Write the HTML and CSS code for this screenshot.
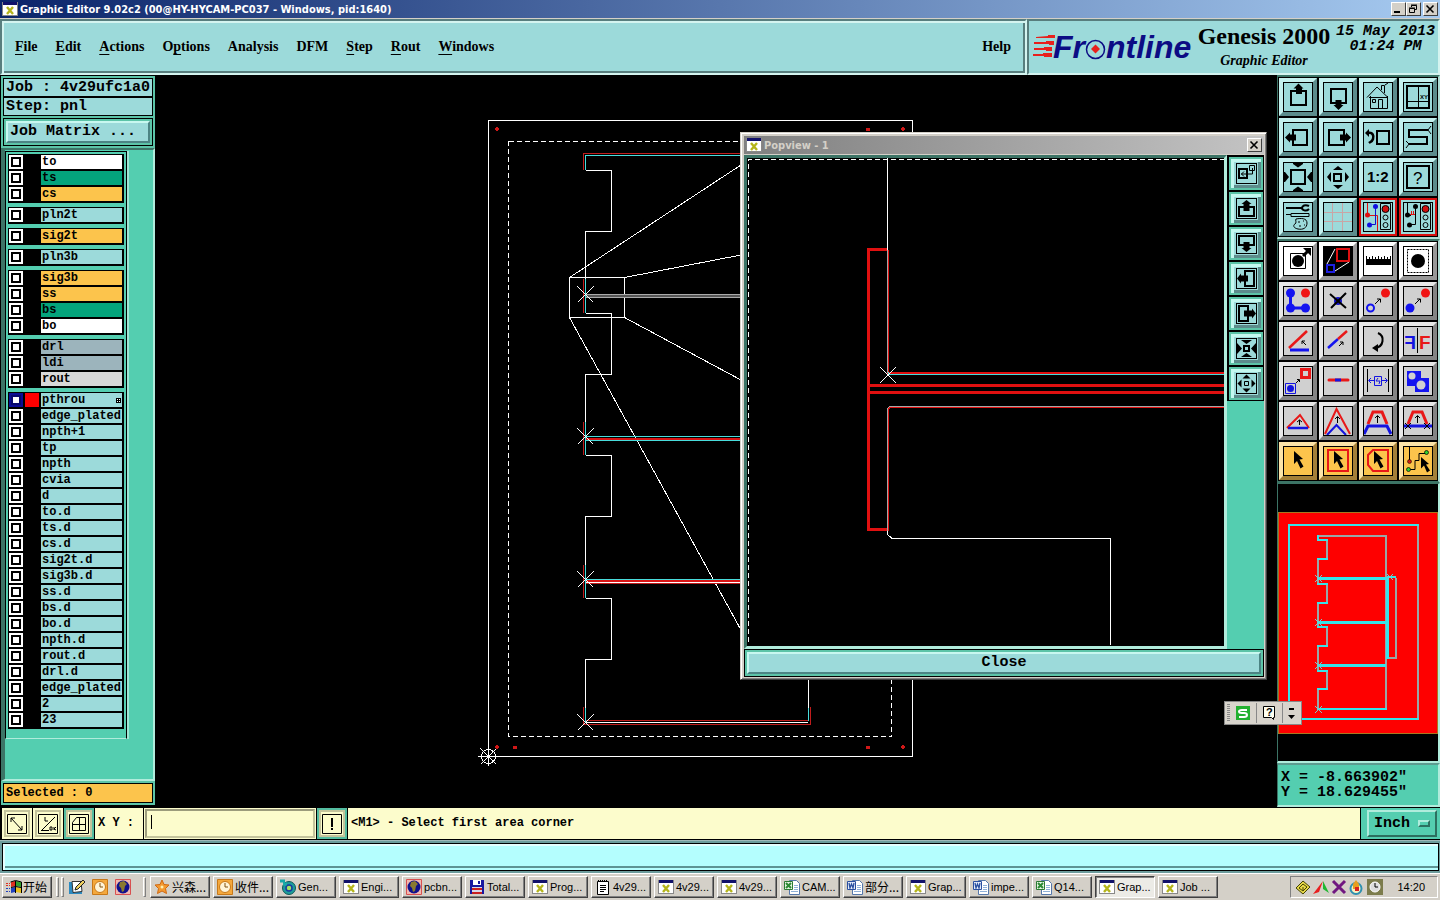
FILE: index.html
```html
<!DOCTYPE html>
<html lang="en">
  <head>
    <title>Graphic Editor 9.02c2</title>
    <meta charset="UTF-8" />
    <link rel="stylesheet" href="styles.css">
  </head>

  <body>
    <!-- shared icons -->
    <svg class="defs" width="0" height="0">
      <symbol id="xwin" viewBox="0 0 16 16">
        <path fill="#888" d="M0 1h16v14H0z"/><path fill="#fff" d="M1 4h14v10H1z"/><path fill="#11116a" d="M1 1h14v3H1z"/>
        <path stroke="#b5b51c" stroke-width="2.4" d="M5 6l6 7M11 6l-6 7"/>
      </symbol>
      <symbol id="excel" viewBox="0 0 16 16">
        <path fill="#fff" stroke="#5577aa" d="M5.500 1.500h7l3 3v11h-10z"/><path stroke="#8fb0d8" d="M10 6.500h4M10 8.500h4M10 10.500h4M7 12.500h7"/>
        <path fill="#e8f5e4" stroke="#2c7a34" d="M.5 2.500h8v8h-8z"/><path stroke="#2c8a34" stroke-width="2" d="M2 4l5 5M7 4l-5 5"/>
      </symbol>
      <symbol id="word" viewBox="0 0 16 16">
        <path fill="#fff" stroke="#5577aa" d="M5.500 1.500h7l3 3v11h-10z"/><path stroke="#8fb0d8" d="M10 6.500h4M10 8.500h4M10 10.500h4M7 12.500h7"/>
        <path fill="#e4ecfa" stroke="#2a4fa0" d="M.5 2.500h8v8h-8z"/><path fill="none" stroke="#2a4fa0" stroke-width="1.300" d="M2 4l1 5 1.500-4L6 9l1-5"/>
      </symbol>
      <symbol id="globe" viewBox="0 0 16 16">
        <path fill="#f2b8b0" stroke="#d85050" d="M.5.5h15v15H.5z"/><circle cx="8" cy="8" r="6.500" fill="#10108c"/>
        <path fill="#8a7a30" d="M5 3l4-1 3 3-2 2-1 5-2 1-1-4-2-2z"/>
      </symbol>
      <symbol id="clock" viewBox="0 0 16 16">
        <path fill="#f4a83c" stroke="#c87818" d="M.5.5h15v15H.5z"/><circle cx="8" cy="8" r="5.500" fill="#fff4d8" stroke="#c87818"/>
        <path fill="none" stroke="#805010" d="M8 4v4h3"/>
      </symbol>
      <symbol id="cursor" viewBox="0 0 30 30"><path d="M11 5l9 8-3.500.500 4 7-3 2-3.500-7.500-3 3z"/></symbol>
    </svg>

    <div class="titlebar">
      <svg class="ico"><use href="#xwin"/></svg>
      <span class="caption">Graphic Editor 9.02c2 (00@HY-HYCAM-PC037 - Windows, pid:1640)</span>
      <button class="win" aria-label="Minimize"><svg viewBox="0 0 12 10"><path d="M2 7h6v2H2z"/></svg></button>
      <button class="win" aria-label="Restore"><svg viewBox="0 0 12 10"><path fill="none" stroke="#000" d="M4.500 3V1.500h5v4H8M2.500 4.500h5v4h-5zM4 1h6M2 4h6"/></svg></button>
      <button class="win last" aria-label="Close"><svg viewBox="0 0 12 10"><path stroke="#000" stroke-width="1.600" d="M2.500 1.500l7 7M9.500 1.500l-7 7"/></svg></button>
    </div>

    <header>
      <nav class="menubar">
        <a href="#"><u>F</u>ile</a>
        <a href="#"><u>E</u>dit</a>
        <a href="#"><u>A</u>ctions</a>
        <a href="#">O<u>p</u>tions</a>
        <a href="#">Analysis</a>
        <a href="#">DFM</a>
        <a href="#"><u>S</u>tep</a>
        <a href="#"><u>R</u>out</a>
        <a href="#"><u>W</u>indows</a>
        <a href="#" class="help">Help</a>
      </nav>
      <div class="brand">
        <svg class="logo" viewBox="1031 28 164 36">
          <g fill="#e8201c">
            <path d="M1036 37l12-1v-1h7v3h-19zM1034 42h12v-1h8v4h-5v-1h-15zM1034 48h10v-1h8v4h-6v-1h-12zM1033 54h10v-1h9v4h-8v-1h-11z"/>
            <path d="M1095.500 44.500l4.500 4.500-4.500 4.500-4.500-4.500z"/>
          </g>
          <text x="1053" y="58">Fr</text>
          <circle cx="1095.500" cy="49.500" r="9" fill="none" stroke="#0c0c84" stroke-width="1.500"/>
          <text x="1106" y="58">ntline</text>
        </svg>
        <div class="product">
          <div class="name">Genesis 2000</div>
          <div class="sub">Graphic Editor</div>
        </div>
        <div class="date">15 May 2013<br>01:24 PM</div>
      </div>
    </header>

    <main>
      <aside class="side">
        <div class="info">Job : 4v29ufc1a0</div>
        <div class="info">Step: pnl</div>
        <div class="matrix"><button>Job Matrix ...</button></div>
        <div class="scroll">
          <div class="layers">
            <div class="group">
              <label class="white"><input type="checkbox"><i></i><span>to</span></label>
              <label class="green"><input type="checkbox"><i></i><span>ts</span></label>
              <label class="orange"><input type="checkbox"><i></i><span>cs</span></label>
            </div>
            <div class="group">
              <label><input type="checkbox"><i></i><span>pln2t</span></label>
            </div>
            <div class="group">
              <label class="orange"><input type="checkbox"><i></i><span>sig2t</span></label>
            </div>
            <div class="group">
              <label><input type="checkbox"><i></i><span>pln3b</span></label>
            </div>
            <div class="group">
              <label class="orange"><input type="checkbox"><i></i><span>sig3b</span></label>
              <label class="orange"><input type="checkbox"><i></i><span>ss</span></label>
              <label class="green"><input type="checkbox"><i></i><span>bs</span></label>
              <label class="white"><input type="checkbox"><i></i><span>bo</span></label>
            </div>
            <div class="group">
              <label class="slate"><input type="checkbox"><i></i><span>drl</span></label>
              <label class="slate"><input type="checkbox"><i></i><span>ldi</span></label>
              <label class="grey"><input type="checkbox"><i></i><span>rout</span></label>
            </div>
            <div class="group">
              <label class="work"><input type="checkbox" checked><i></i><span>pthrou<svg viewBox="0 0 5 5"><path d="M0 0h5v5H0z"/><path fill="#fff" d="M1 1h1v1H1zM3 1h1v1H3zM1 3h1v1H1zM3 3h1v1H3z"/></svg></span></label>
              <label><input type="checkbox"><i></i><span>edge_plated</span></label>
              <label><input type="checkbox"><i></i><span>npth+1</span></label>
              <label><input type="checkbox"><i></i><span>tp</span></label>
              <label><input type="checkbox"><i></i><span>npth</span></label>
              <label><input type="checkbox"><i></i><span>cvia</span></label>
              <label><input type="checkbox"><i></i><span>d</span></label>
              <label><input type="checkbox"><i></i><span>to.d</span></label>
              <label><input type="checkbox"><i></i><span>ts.d</span></label>
              <label><input type="checkbox"><i></i><span>cs.d</span></label>
              <label><input type="checkbox"><i></i><span>sig2t.d</span></label>
              <label><input type="checkbox"><i></i><span>sig3b.d</span></label>
              <label><input type="checkbox"><i></i><span>ss.d</span></label>
              <label><input type="checkbox"><i></i><span>bs.d</span></label>
              <label><input type="checkbox"><i></i><span>bo.d</span></label>
              <label><input type="checkbox"><i></i><span>npth.d</span></label>
              <label><input type="checkbox"><i></i><span>rout.d</span></label>
              <label><input type="checkbox"><i></i><span>drl.d</span></label>
              <label><input type="checkbox"><i></i><span>edge_plated</span></label>
              <label><input type="checkbox"><i></i><span>2</span></label>
              <label><input type="checkbox"><i></i><span>23</span></label>
            </div>
          </div>
        </div>
        <div class="selected">Selected : 0</div>
      </aside>

      <!-- panel drawing -->
      <svg class="canvas" viewBox="156 75 1121 732" preserveAspectRatio="xMinYMin slice" shape-rendering="crispEdges">
        <g fill="none" stroke="#fff">
          <path d="M488.500 120.500h424v636h-424z"/>
          <path stroke-dasharray="5 3" d="M508.500 141.500h383v595h-383z"/>
          <path d="M585.500 170.500h26v61h-26V279M585.500 313.500h26v61h-26V422M585.500 455.500h26v61h-26V565M585.500 598.500h26v61h-26V708M808.500 600V708"/>
          <path d="M569.500 277.500h55v40h-55z"/>
          <path d="M569.500 277.500L741 165M624.500 277.500L741 255M624.500 317.500L741 380M569.500 317.500L741 630"/>
        </g>
        <g fill="none" stroke="#c01c1c">
          <path d="M583.500 170v-16.500H741M583.500 279v34M583.500 422v33M583.500 565v33M583.500 707v17.500h227V707M585 720.500h223"/>
          <path stroke="#d81414" stroke-width="2" d="M586 439h155M586 581h155"/>
          <path d="M586 583.500h155"/>
        </g>
        <g fill="none" stroke="#48dcdc">
          <path d="M585.500 170v-14.500H741M585.500 279v34M585.500 422v33M585.500 565v33M585.500 708v14M808.500 708v13"/>
          <path d="M586 436.500h155M586 440.500h155M586 579.500h155"/>
          <path stroke="#555" stroke-width="2" d="M586 296h155"/>
          <path stroke="#aaa" d="M586 294.500h155M586 297.500h155"/>
          <path stroke="#fff" d="M586 582.500h155M586 722.500h222"/>
        </g>
        <g fill="none" stroke="#fff">
          <path d="M577.500 286.500l16 16M593.500 286.500l-16 16M577.500 428.500l16 16M593.500 428.500l-16 16M577.500 571.500l16 16M593.500 571.500l-16 16M577.500 714.500l16 16M593.500 714.500l-16 16"/>
          <circle cx="488.500" cy="756.500" r="7"/>
          <path d="M478 756.500h20M488.500 746v20M480.500 748.500l16 16M496.500 748.500l-16 16"/>
        </g>
        <path fill="#d01818" d="M496 127h2v1h1v2h-1v1h-2v-1h-1v-2h1zM866 128h4v3h-4zM902 127h2v1h1v2h-1v1h-2v-1h-1v-2h1zM496 745h2v1h1v2h-1v1h-2v-1h-1v-2h1zM513 746h4v3h-4zM866 746h4v3h-4zM902 745h2v1h1v2h-1v1h-2v-1h-1v-2h1z"/>
      </svg>

      <aside class="tools">
        <div class="panel">
          <button aria-label="Pan up"><svg viewBox="0 0 30 30"><rect x="8" y="9" width="15" height="14" fill="none" stroke="#000" stroke-width="2"/><path d="M15.500 1.500l5 5h-1.500V12h-6V6.500h-2.500z"/></svg></button>
          <button aria-label="Pan down"><svg viewBox="0 0 30 30"><rect x="8" y="7" width="15" height="14" fill="none" stroke="#000" stroke-width="2"/><path d="M15.500 28l5-5h-2v-5h-6v5h-2z"/></svg></button>
          <button aria-label="Home"><svg viewBox="0 0 30 30"><g fill="none" stroke="#000"><path d="M4 15.500L14 5l11 10.500M7.500 14v12.500h17V14M6 15.500h18M18.500 8V3.500h3V11M15.500 26v-8.500h4V26M9.500 17.500h3v3h-3z"/><path d="M22 3l3-2"/></g></svg></button>
          <button aria-label="Coordinates"><svg viewBox="0 0 30 30"><rect x="4" y="4" width="22" height="22" fill="none" stroke="#000" stroke-width="2"/><path stroke="#000" d="M15.500 4v22M4 19.500h22"/><text x="17" y="17" font-size="6" font-weight="bold">XY</text></svg></button>
          <button aria-label="Pan left"><svg viewBox="0 0 30 30"><rect x="10" y="8" width="14" height="15" fill="none" stroke="#000" stroke-width="2"/><path d="M2 15.500l5-5v2h6v6H7v2z"/></svg></button>
          <button aria-label="Pan right"><svg viewBox="0 0 30 30"><rect x="6" y="8" width="15" height="15" fill="none" stroke="#000" stroke-width="2"/><path d="M28 15.500l-5-5v2h-6v6h6v2z"/></svg></button>
          <button aria-label="Undo zoom"><svg viewBox="0 0 30 30"><rect x="14" y="9" width="12" height="13" fill="none" stroke="#000" stroke-width="2"/><path d="M2 11l4-4v8z"/><path fill="none" stroke="#000" stroke-width="2.500" d="M5 11c5-1 6 3 5 6s-3 3-4 4"/></svg></button>
          <button aria-label="Serpentine"><svg viewBox="0 0 30 30"><path fill="none" stroke="#000" stroke-width="2" d="M25 8H6v7h18v7H6"/><path stroke="#000" d="M25 8l3-4M25 8l3 4M6 22l-3-3M6 22l-3 4"/></svg></button>
          <button aria-label="Zoom in"><svg viewBox="0 0 30 30"><rect x="8" y="8" width="14" height="14" fill="none" stroke="#000" stroke-width="2"/><path d="M10 1h10v1l-5 3.500L10 2zM10 29h10v-1l-5-3.500-5 3.500zM1 10v10h1l4-5-4-5zM29 10v10h-1l-4-5 4-5z"/></svg></button>
          <button aria-label="Zoom out"><svg viewBox="0 0 30 30"><rect x="11" y="12" width="7" height="7" fill="none" stroke="#000" stroke-width="2"/><path d="M10 8h10l-5-4zM10 23h10l-5 4zM8 10v10l-4-5zM22 10v10l4-5z"/></svg></button>
          <button aria-label="Scale 1:2"><svg viewBox="0 0 30 30"><text x="4" y="20" font-size="15" font-weight="bold">1:2</text></svg></button>
          <button aria-label="Query"><svg viewBox="0 0 30 30"><rect x="4" y="4" width="22" height="22" fill="none" stroke="#000" stroke-width="2"/><text x="10" y="22" font-size="17">?</text></svg></button>
          <button aria-label="Setup"><svg viewBox="0 0 30 30"><path stroke="#000" stroke-width="2" d="M3 6h17"/><path fill="none" stroke="#000" stroke-width="2" d="M26 4c-4-2-7 0-7 2s4 4 7 1"/><path fill="none" stroke="#000" d="M3 12.500h5v-1h18v3H8v-2M13 17c5-1 11-1 11 4s-4 7-9 6-5-4-3-5 0-4 1-5zM15 20h2M20 19h1M21 23h1M16 24h2"/></svg></button>
          <button aria-label="Grid"><svg viewBox="0 0 30 30"><path stroke="#c9a5a5" d="M9.500 1v28M19.500 1v28M1 10.500h28M1 19.500h28"/></svg></button>
          <button class="red" aria-label="Snap"><svg viewBox="0 0 30 30"><path fill="none" stroke="#e01010" d="M4.500 1v12.500h10V29"/><path fill="none" stroke="#1010d0" d="M12.500 4v18.500H7"/><circle cx="4.500" cy="13" r="2.500" fill="#e01010"/><circle cx="12.500" cy="4.500" r="2.500" fill="#1010e0"/><circle cx="6.500" cy="23" r="2.500" fill="#1010e0"/><path fill="none" stroke="#000" d="M17.500 1.500h10v26h-10z"/><circle cx="22.500" cy="7" r="3.500" fill="#d01010" stroke="#000"/><circle cx="22.500" cy="15.500" r="2.500" fill="none" stroke="#000"/><circle cx="22.500" cy="23" r="2.500" fill="none" stroke="#000"/></svg></button>
          <button class="red" aria-label="Drc"><svg viewBox="0 0 30 30"><path fill="none" stroke="#000" d="M4.500 1v12M12.500 4v18.500H7M4 13.500h4"/><path fill="none" stroke="#e01010" d="M7 12.500h5M8.500 9v4M10.500 9v4"/><circle cx="4.500" cy="13" r="2.500"/><circle cx="12.500" cy="4.500" r="2.500"/><circle cx="6.500" cy="23" r="2.500"/><path fill="none" stroke="#000" d="M17.500 1.500h10v26h-10z"/><circle cx="22.500" cy="7" r="3.500" fill="#d01010" stroke="#000"/><circle cx="22.500" cy="15.500" r="2.500" fill="none" stroke="#000"/><circle cx="22.500" cy="23" r="2.500" fill="none" stroke="#000"/></svg></button>
        </div>

        <div class="panel edit">
          <button class="white" aria-label="Feature"><svg viewBox="0 0 30 30"><path fill="none" stroke="#000" d="M7.500 7.500h15v15h-15z"/><circle cx="15" cy="15" r="6"/><path stroke="#000" stroke-width="3" d="M20 10l6-6"/><path d="M20 2h8v8z"/></svg></button>
          <button class="white" aria-label="Popview"><svg viewBox="0 0 30 30"><path d="M0 0h30v30H0z"/><path stroke="#fff" d="M4 18L12 3M12 25l14-9"/><path fill="none" stroke="#e01010" stroke-width="2" d="M14 3h12v12H14z"/><path fill="none" stroke="#2020e0" stroke-width="2" d="M4 19h7v7H4z"/></svg></button>
          <button class="white" aria-label="Measure"><svg viewBox="0 0 30 30"><path d="M3 13h25v6H3zM3 10h1v3H3zM6 11h1v2H6zM9 10h1v3H9zM12 11h1v2h-1zM15 10h1v3h-1zM18 11h1v2h-1zM21 10h1v3h-1zM24 11h1v2h-1zM27 10h1v3h-1z"/></svg></button>
          <button class="white" aria-label="Select area"><svg viewBox="0 0 30 30"><path fill="none" stroke="#000" stroke-dasharray="2 1" d="M4.500 3.500h21v23h-21z"/><circle cx="15" cy="15" r="7"/></svg></button>

          <button aria-label="Chain"><svg viewBox="0 0 30 30"><path fill="none" stroke="#1414f0" stroke-width="3" d="M7.500 7v15h15"/><g fill="#1414f0"><circle cx="7.500" cy="7" r="4.500"/><circle cx="7.500" cy="22" r="4.500"/><circle cx="22.500" cy="22" r="4.500"/></g><circle cx="22.500" cy="7" r="4.500" fill="#f01414"/></svg></button>
          <button aria-label="Delete"><svg viewBox="0 0 30 30"><circle cx="15" cy="15" r="4" fill="#1414c8"/><path stroke="#000" stroke-width="2" d="M7 8l16 14M23 7L8 22"/></svg></button>
          <button aria-label="Move"><svg viewBox="0 0 30 30"><circle cx="7.500" cy="22" r="3.500" fill="none" stroke="#1414f0" stroke-width="2"/><circle cx="22.500" cy="7" r="4.500" fill="#f01414"/><path fill="none" stroke="#000" d="M12 18l5-5M14 13h3.500v3.500"/></svg></button>
          <button aria-label="Copy"><svg viewBox="0 0 30 30"><circle cx="7" cy="22" r="4.500" fill="#1414f0"/><circle cx="22.500" cy="7" r="4.500" fill="#f01414"/><path fill="none" stroke="#000" d="M12 18l5-5M14 13h3.500v3.500"/></svg></button>

          <button aria-label="Angle"><svg viewBox="0 0 30 30"><path stroke="#e81818" stroke-width="2.500" d="M6 22L24 5"/><path stroke="#1414f0" stroke-width="3" d="M7 24h19"/><path fill="none" stroke="#000" d="M23 19l-4-4M19 18v-3h3"/></svg></button>
          <button aria-label="Extend"><svg viewBox="0 0 30 30"><path stroke="#1414f0" stroke-width="2.500" d="M5 22l10-9"/><path stroke="#e81818" stroke-width="2.500" d="M15 13l9-8"/><path fill="none" stroke="#000" d="M16 20l4-4M17 16h3v3"/></svg></button>
          <button aria-label="Rotate"><svg viewBox="0 0 30 30"><path fill="none" stroke="#000" stroke-width="2" d="M15 7c7 3 6 14-3 15"/><path d="M9 22l6-4v8z"/></svg></button>
          <button aria-label="Mirror"><svg viewBox="0 0 30 30"><text transform="scale(-1 1)" x="-13" y="23" font-size="19" font-weight="bold" fill="#1414e0">F</text><path stroke="#000" d="M14.500 2v25"/><text x="16" y="23" font-size="19" font-weight="bold" fill="#e81818">F</text></svg></button>

          <button aria-label="Change symbol"><svg viewBox="0 0 30 30"><path fill="none" stroke="#e81818" stroke-width="3" d="M18.500 3.500h8v8h-8z"/><path fill="none" stroke="#1414e0" d="M2.500 17.500h10v10h-10z"/><circle cx="7.500" cy="22.500" r="3.500" fill="#1414e0"/><path fill="none" stroke="#000" d="M13 17l3-3M14 13.500h2.500V16"/></svg></button>
          <button aria-label="Break"><svg viewBox="0 0 30 30"><path stroke="#e81818" stroke-width="3" stroke-linecap="round" d="M6 14h19"/><path stroke="#1414e0" stroke-width="3" d="M12 14h6"/></svg></button>
          <button aria-label="Spacing"><svg viewBox="0 0 30 30"><path stroke="#000" d="M4.500 3v23M25.500 3v23"/><path fill="none" stroke="#1414e0" d="M11.500 10.500h7v9h-7zM6 14.500h5M19 14.500h5M8 12l-2.500 2.500L8 17M22 12l2.500 2.500L22 17M15 12l-2 3h4l-1 3"/></svg></button>
          <button aria-label="Contourize"><svg viewBox="0 0 30 30"><path fill="#1414f0" d="M4 5h14v7h8v14H12v-6H4z"/><circle cx="9" cy="10" r="3.500" fill="#d0d0d0"/><circle cx="18" cy="19" r="4.500" fill="#d0d0d0"/></svg></button>

          <button aria-label="Move triangle"><svg viewBox="0 0 30 30"><path fill="none" stroke="#e81818" stroke-width="2" d="M4 22L17 9l9 13"/><path stroke="#1414e0" stroke-width="2.500" d="M5 22h20"/><path fill="none" stroke="#000" d="M16.500 19v-5M14 16l2.500-2 2.500 2"/></svg></button>
          <button aria-label="Stretch peak"><svg viewBox="0 0 30 30"><path fill="none" stroke="#e81818" stroke-width="2" d="M2 28L13.500 3 27 28"/><path fill="none" stroke="#1414e0" stroke-width="2" d="M4 29l9.500-10L23 29"/><path fill="none" stroke="#000" d="M14.500 17v-6M12 13l2.500-2.500L17 13"/></svg></button>
          <button aria-label="Parallel trace"><svg viewBox="0 0 30 30"><path fill="none" stroke="#e81818" stroke-width="3" d="M5 18l5-12h9l5 12"/><path fill="none" stroke="#1414e0" stroke-width="3" d="M1 28l4-8h19l4 8"/><path fill="none" stroke="#000" d="M14.500 17v-7M12 12l2.500-2.500L17 12"/></svg></button>
          <button aria-label="Parallel resize"><svg viewBox="0 0 30 30"><path fill="none" stroke="#e81818" stroke-width="3" d="M5 18l5-12h9l5 12"/><path stroke="#1414e0" stroke-width="3" d="M1 20h28"/><path fill="none" stroke="#000" d="M14.500 17v-7M12 12l2.500-2.500L17 12M2 17l6 6M8 17l-6 6M21 17l6 6M27 17l-6 6"/></svg></button>

          <button class="orange" aria-label="Select"><svg viewBox="0 0 30 30"><use href="#cursor"/></svg></button>
          <button class="orange" aria-label="Select rectangle"><svg viewBox="0 0 30 30"><path fill="none" stroke="#e81818" stroke-width="2" d="M5 4h20v21H5z"/><use href="#cursor"/></svg></button>
          <button class="orange" aria-label="Select polygon"><svg viewBox="0 0 30 30"><path fill="none" stroke="#e81818" stroke-width="2" d="M10 4h15v21H10l-5-6V9z"/><use href="#cursor"/></svg></button>
          <button class="orange" aria-label="Select net"><svg viewBox="0 0 30 30"><path fill="none" stroke="#000" d="M6.500 1v13M6 23.500h6v-9h4V7.500h6"/><circle cx="6.500" cy="15.500" r="2" fill="#c82010" stroke="#000" stroke-width=".5"/><g fill="#30d030" stroke="#000" stroke-width=".7"><circle cx="5.500" cy="23.500" r="2"/><circle cx="23.500" cy="6.500" r="2"/></g><path d="M18 11l8 7-3 .5 4 6-3 2-3-7-3 3z"/></svg></button>
        </div>

        <div class="overview">
          <svg viewBox="0 0 160 277" preserveAspectRatio="xMidYMin meet" shape-rendering="crispEdges">
            <path fill="#fe0000" stroke="#a87820" d="M.5 28.500h159v221H.5z"/>
            <g fill="none" stroke="#98a8a8" stroke-width="2">
              <path d="M140 40v195"/>
              <path d="M39 52h69v173M49 56v19M40 75v24M49 100v19M40 119v24M49 143v19M40 162v24M49 187v18M40 205v20M109 174h9V94"/>
            </g>
            <g fill="none" stroke="#36e4ea" stroke-width="2">
              <path d="M141 41H11v194h130"/>
              <path d="M40 51v5h10M50 75H39M39 100h11M50 119H39M39 143h11M50 162H39M39 187h11M50 205H39M39 225h70M109 93h9"/>
              <path stroke-width="3" d="M39 94.500h70M39 138.500h69M39 181.500h69M109.500 94v81"/>
            </g>
            <path fill="none" stroke="#7cc" d="M37 91l7 7M44 91l-7 7M37 135l7 7M44 135l-7 7M37 178l7 7M44 178l-7 7M37 222l7 7M44 222l-7 7M109 90l6 6M115 90l-6 6"/>
          </svg>
        </div>

        <div class="coords">X = -8.663902"<br>Y = 18.629455"</div>
      </aside>
    </main>

    <div class="command">
      <button aria-label="Snap corner"><svg viewBox="0 0 20 20"><path d="M.5.5h19v19H.5zM4 4l11 12M4 8V4h4M15 12v4h-4"/></svg></button>
      <button aria-label="Absolute"><svg viewBox="0 0 20 20"><path d="M.5.5h19v19H.5zM3 17L17 3M3 16.500h8M7 3v4h3M12 13h2v3h-2zM16 13v3M18 13l-2 2 2 1"/></svg></button>
      <button class="on" aria-label="Grid"><svg viewBox="0 0 20 20"><path d="M.5.500h19v19H.5zM3.500 8.500l4-5h9v13h-13zM10.500 3v14M3 10.500h14"/></svg></button>
      <label for="xy">X Y :</label>
      <div class="field"><input type="text" id="xy"></div>
      <button class="on" aria-label="Alert"><svg viewBox="0 0 20 20"><path d="M.5.5h19v19H.5z"/><path stroke-width="2" d="M10 4v9M10 14v2"/></svg></button>
      <output>&lt;M1&gt; - Select first area corner</output>
      <div class="units"><button>Inch<i></i></button></div>
    </div>

    <div class="status"><div></div></div>

    <footer class="taskbar">
      <button class="start"><svg class="ico" viewBox="0 0 16 16"><path fill="#e03020" d="M5 3l4-1v5l-4 1z"/><path fill="#30a030" d="M10 2l5 1v5l-5-1z"/><path fill="#2040c0" d="M5 9l4-1v5l-4 1z"/><path fill="#e8c020" d="M10 8l5 1v5l-5-1z"/><path fill="none" stroke="#000" d="M4.500 3l5-1.500 6 1.500v11M9.500 2v12M5 8.500l4.500-1 5.500 1"/><path stroke="#e03020" stroke-dasharray="2 1" d="M0 4.500h4M0 6.500h4"/><path stroke="#2040c0" stroke-dasharray="2 1" d="M0 9.500h4M0 12.500h4"/></svg><span lang="zh">开始</span></button>
      <span class="grip"></span><span class="grip thin"></span>
      <div class="quick">
        <button aria-label="Desktop"><svg class="ico" viewBox="0 0 16 16"><path fill="#2c8ac0" d="M0 3h13v12H0z"/><path fill="#fff" stroke="#333" d="M3 2.500h9l1 10-9 1z"/><path fill="#f0d060" stroke="#222" d="M14 1l2 2-7 7-3 1 1-3z"/></svg></button>
        <button aria-label="Outlook"><svg class="ico"><use href="#clock"/></svg></button>
        <button aria-label="Browser"><svg class="ico"><use href="#globe"/></svg></button>
      </div>
      <span class="grip"></span>
      <div class="tasks">
        <button><svg class="ico" viewBox="0 0 16 16"><path fill="#f49a30" stroke="#d06810" d="M8 1l2 4.500 5 .5-3.500 3.500 1 5L8 12l-4.500 2.500 1-5L1 6l5-.5z"/><circle cx="8" cy="8" r="1.500" fill="#fff0b0"/></svg><span lang="zh">兴森...</span></button>
        <button><svg class="ico"><use href="#clock"/></svg><span lang="zh">收件...</span></button>
        <button><svg class="ico" viewBox="0 0 16 16"><circle cx="9" cy="9" r="6.500" fill="#1c9c9c" stroke="#105858"/><circle cx="9" cy="9" r="3" fill="#a0e060" stroke="#1838a0" stroke-width="1.500"/><path stroke="#18a8a8" stroke-width="3" d="M0 2h5M3 5h4"/></svg><span>Gen...</span></button>
        <button><svg class="ico"><use href="#xwin"/></svg><span>Engi...</span></button>
        <button><svg class="ico"><use href="#globe"/></svg><span>pcbn...</span></button>
        <button><svg class="ico" viewBox="0 0 16 16"><path fill="#1818a0" d="M1 1h14v14H1z"/><path fill="#fff" d="M4 1h8v5H4z"/><path fill="#1818a0" d="M9 2h2v3H9z"/><path fill="#d8d8e8" d="M3 8h10v7H3z"/><path stroke="#c82020" stroke-width="2" d="M3 10h10M3 14h10"/></svg><span>Total...</span></button>
        <button><svg class="ico"><use href="#xwin"/></svg><span>Prog...</span></button>
        <button><svg class="ico" viewBox="0 0 16 16"><path fill="#fff" stroke="#000" d="M2.500 2.500h11v13h-11z"/><path stroke="#000" d="M5 6.500h6M5 8.500h6M5 10.500h6M5 12.500h4"/><path stroke="#000" stroke-dasharray="1 1" stroke-width="2" d="M3 2h10"/></svg><span>4v29...</span></button>
        <button><svg class="ico"><use href="#xwin"/></svg><span>4v29...</span></button>
        <button><svg class="ico"><use href="#xwin"/></svg><span>4v29...</span></button>
        <button><svg class="ico"><use href="#excel"/></svg><span>CAM...</span></button>
        <button><svg class="ico"><use href="#word"/></svg><span lang="zh">部分...</span></button>
        <button><svg class="ico"><use href="#xwin"/></svg><span>Grap...</span></button>
        <button><svg class="ico"><use href="#word"/></svg><span>impe...</span></button>
        <button><svg class="ico"><use href="#excel"/></svg><span>Q14...</span></button>
        <button class="active"><svg class="ico"><use href="#xwin"/></svg><span>Grap...</span></button>
        <button><svg class="ico"><use href="#xwin"/></svg><span>Job ...</span></button>
      </div>
      <div class="tray">
        <svg viewBox="0 0 90 16">
          <path fill="#e8d848" stroke="#444400" d="M1 9l7-7 7 6-7 7z"/><path fill="none" stroke="#444400" d="M4 9l4-4 4 3-4 4zM8 8v3"/>
          <path fill="#e82020" d="M28 2l-10 13 6-2z"/><path fill="#20b830" d="M28 2l6 12-6-4z"/>
          <path stroke="#701880" stroke-width="3" d="M38 2l12 12M50 2L38 14"/>
          <circle cx="61" cy="9.500" r="5.500" fill="#f8f0c0" stroke="#3090b0" stroke-width="2"/><path fill="#e8a020" d="M58 5l3-4 3 4v5h-6z"/><path fill="#d82020" d="M60 8h4v4h-4z"/>
          <path fill="#7c7c4c" d="M72 0h16v16H72z"/><circle cx="80" cy="8" r="5" fill="#ddd" stroke="#fff"/><path fill="none" stroke="#000" d="M80 4v4h3"/>
        </svg>
        <time>14:20</time>
      </div>
    </footer>

    <!-- floating windows -->
    <section class="popview">
      <div class="poptitle">
        <svg class="ico"><use href="#xwin"/></svg>
        <span class="caption">Popview - 1</span>
        <button class="win last" aria-label="Close popview"><svg viewBox="0 0 12 10"><path stroke="#000" stroke-width="1.600" d="M2.500 1.500l7 7M9.500 1.500l-7 7"/></svg></button>
      </div>
      <div class="popbody">
        <svg class="view" viewBox="747 158 476 488" preserveAspectRatio="xMinYMin slice" shape-rendering="crispEdges">
          <path fill="none" stroke="#fff" stroke-dasharray="5 3" d="M1224 159.500H748.500V644"/>
          <g fill="none" stroke="#e01010" stroke-width="3">
            <path d="M888 249.500h-19.500v279.500H888M869 385.500h355M869 392.500h355"/>
            <path stroke-width="2" d="M888 250v123h336"/>
            <path stroke-width="2" d="M1224 406H889.500L888 408v122"/>
          </g>
          <g fill="none" stroke="#a8a8a8">
            <path d="M887.500 250v123M887.500 532V408l2-2.500H1224"/>
            <path stroke="#48dcdc" d="M888 372l2 2.500h334"/>
            <path stroke="#fff" d="M887.500 158v92M887.500 530v4l4 3.500h218V644M879.500 366.500l16 16M895.500 366.500l-16 16"/>
          </g>
        </svg>
        <div class="poptools">
          <button aria-label="Link view"><svg viewBox="0 0 21 21"><path fill="none" stroke="#000" stroke-width="2" d="M3 6h8v9H3z"/><path fill="none" stroke="#000" d="M13.500 2.500h5v5h-5zM16.500 5v6H5M8 8.500L5.500 11 8 13.500"/></svg></button>
          <button aria-label="Pan up"><svg viewBox="0 0 21 21"><path fill="none" stroke="#000" stroke-width="2" d="M8 9H3v9h15V9h-5"/><path d="M10.500 2l5 4h-2v7h-6V6h-2z"/></svg></button>
          <button aria-label="Pan down"><svg viewBox="0 0 21 21"><path fill="none" stroke="#000" stroke-width="2" d="M8 12H3V3h15v9h-5"/><path d="M10.500 19l5-4h-2V9h-6v6h-2z"/></svg></button>
          <button aria-label="Pan left"><svg viewBox="0 0 21 21"><path fill="none" stroke="#000" stroke-width="2" d="M9 8V3h9v15H9v-5"/><path d="M1 10.500l4-5v2h7v6H5v2z"/></svg></button>
          <button aria-label="Pan right"><svg viewBox="0 0 21 21"><path fill="none" stroke="#000" stroke-width="2" d="M12 8V3H3v15h9v-5"/><path d="M20 10.500l-4-5v2H8v6h8v2z"/></svg></button>
          <button aria-label="Zoom in"><svg viewBox="0 0 21 21"><path fill="none" stroke="#000" stroke-width="2" d="M8 8h5v5H8z"/><path d="M5 2h11l-5.500 4zM5 19h11l-5.500-4zM1 5v11l5-5.500zM20 5v11l-5-5.500z"/></svg></button>
          <button aria-label="Zoom out"><svg viewBox="0 0 21 21"><path fill="none" stroke="#000" d="M8.500 8.500h4v4h-4z"/><path d="M6.500 5.500h8l-4-4zM6.500 15.500h8l-4 4zM5.500 6.500v8l-4-4zM15.500 6.500v8l4-4z"/></svg></button>
        </div>
      </div>
      <div class="popclose"><button>Close</button></div>
    </section>

    <div class="ime">
      <span class="dots"></span>
      <button aria-label="Input method"><svg viewBox="0 0 16 16"><path fill="#22b030" d="M1 1h14v14H1z"/><path fill="none" stroke="#fff" stroke-width="2" d="M12 5H7c-4 0-4 3 0 3h2c4 0 4 4 0 4H4"/></svg></button>
      <button aria-label="Help"><svg viewBox="0 0 16 16"><path fill="#fffff0" stroke="#000" d="M2.500 1.500h11v11h-1v2l-2-2h-8z"/><text x="5" y="11" font-size="11" font-weight="bold">?</text></svg></button>
      <button aria-label="Options"><svg viewBox="0 0 16 16"><path d="M6 3h5v2H6zM5 10h7l-3.500 4z"/></svg></button>
    </div>
  </body>
</html>
```
FILE: styles.css
```css
* {
  box-sizing: border-box;
  margin: 0;
  padding: 0;
}

body {
  height: 100vh;
  display: flex;
  flex-direction: column;
  overflow: hidden;
  background: #000;
  color: #000;
  font-family: "Liberation Mono", monospace;
}

button {
  color: #000;
  font: inherit;
}

svg {
  display: block;
}

svg text {
  font-family: "Liberation Sans", sans-serif;
}

.defs {
  position: absolute;
}

.ico {
  width: 16px;
  height: 16px;
  flex: none;
}

/* title bar */
.titlebar {
  height: 18px;
  flex: none;
  display: flex;
  align-items: center;
  padding: 0 2px;
  background: linear-gradient(90deg, #0a246a, #a6caf0);
}

.caption {
  flex: 1;
  padding-left: 2px;
  color: #fff;
  font: bold 11px "DejaVu Sans Condensed", "DejaVu Sans", sans-serif;
}

.win {
  width: 15px;
  height: 14px;
  border: 1px solid;
  border-color: #fff #404040 #404040 #fff;
  background: #d4d0c8;
}

.win.last {
  margin-left: 2px;
}

.win svg {
  width: 12px;
  height: 10px;
}

/* header */
header {
  height: 57px;
  flex: none;
  display: flex;
  border-top: 1px solid #d4d0c8;
  background: #9cdada;
}

.menubar {
  flex: 1;
  display: flex;
  align-items: center;
  gap: 18px;
  padding: 0 14px 0 13px;
  border: 2px solid;
  border-color: #587e7e #d4f4f0 #d4f4f0 #587e7e;
  box-shadow: inset 2px 2px #d4f4f0, inset -2px -2px #587e7e;
}

.menubar a {
  color: #000;
  font: bold 14px "Liberation Serif", serif;
  text-decoration: none;
}

.menubar u {
  text-underline-offset: 3px;
}

.menubar .help {
  margin-left: auto;
}

.brand {
  width: 413px;
  display: flex;
  border: 2px solid;
  border-color: #587e7e #d4f4f0 #d4f4f0 #587e7e;
}

.logo {
  width: 164px;
  height: 36px;
  margin: 7px 0 0 2px;
}

.logo text {
  fill: #0c0c84;
  font: italic bold 32px "Liberation Sans", sans-serif;
}

.product {
  width: 138px;
  font-family: "Liberation Serif", serif;
  font-weight: bold;
  text-align: center;
}

.product .name {
  font-size: 24px;
  line-height: 30px;
}

.product .sub {
  font-size: 14px;
  font-style: italic;
  line-height: 20px;
}

.date {
  flex: 1;
  padding-top: 3px;
  font-size: 15px;
  font-style: italic;
  font-weight: bold;
  line-height: 15px;
  text-align: center;
  white-space: nowrap;
}

/* work area */
main {
  flex: 1;
  min-height: 0;
  display: flex;
}

.side {
  width: 154px;
  flex: none;
  display: flex;
  flex-direction: column;
  margin: 1px 1px 2px;
  padding: 2px;
  background: #5cc4a8;
}

.info {
  height: 19px;
  padding-left: 2px;
  border: 1px solid #000;
  background: #9cdada;
  font-size: 15px;
  font-weight: bold;
  line-height: 17px;
  white-space: nowrap;
}

.matrix {
  margin-top: 2px;
  padding: 2px;
  border: 1px solid #000;
}

.matrix button {
  width: 100%;
  height: 22px;
  padding-left: 2px;
  border: 2px solid;
  border-color: #c8f8f0 #4c8484 #4c8484 #c8f8f0;
  background: #9cdada;
  font-size: 15px;
  font-weight: bold;
  line-height: 18px;
  text-align: left;
}

.scroll {
  flex: 1;
  margin: 2px -2px 2px;
  padding-top: 1px;
  border: solid;
  border-width: 2px 2px 2px 4px;
  border-color: #3c7466 #b0ecdc #b0ecdc #3c7466;
  background: #54ceb0;
}

.layers {
  width: 122px;
  height: 588px;
  padding: 2px 2px 10px;
  border: 1px solid #000;
  border-bottom-color: #b0ecdc;
  background: #54ceb0;
  box-shadow: 2px 0 #a0e4d4;
}

.group {
  margin-bottom: 4px;
  padding: 1px 2px 0 1px;
  background: #000;
}

.layers label {
  height: 16px;
  display: flex;
}

.layers input {
  width: 14px;
  height: 14px;
  flex: none;
  appearance: none;
  border: 2px solid #fff;
  background: #fff;
  box-shadow: inset 0 0 0 2px #000;
}

.layers i {
  width: 14px;
  height: 14px;
  margin: 0 2px;
}

.layers span {
  height: 14px;
  flex: 1;
  display: flex;
  align-items: center;
  justify-content: space-between;
  padding: 0 1px;
  background: #9cdada;
  font-size: 12px;
  font-weight: bold;
  line-height: 14px;
}

.layers span svg {
  width: 5px;
  height: 5px;
}

.layers .white span { background: #fff; }
.layers .green span { background: #04a47c; }
.layers .orange span { background: #fcc44c; }
.layers .slate span { background: #9cb4bc; }
.layers .grey span { background: #d8d8d8; }
.layers .work i { background: #fe0000; }

.layers .work input {
  border-color: #0c0c94;
  box-shadow: inset 0 0 0 2px #08086c;
}

.selected {
  height: 20px;
  padding-left: 2px;
  border: 1px solid #000;
  background: #fcc44c;
  font-size: 12px;
  font-weight: bold;
  line-height: 18px;
}

.canvas {
  flex: 1;
  min-width: 0;
  height: 100%;
}

/* right tools */
.tools {
  width: 163px;
  flex: none;
  display: flex;
  flex-direction: column;
}

.panel {
  display: grid;
  grid-template-columns: repeat(4, 38px);
  gap: 2px;
  padding: 1px;
  border: solid;
  border-width: 2px 2px 2px 1px;
  border-color: #3c7466 #b0dcd4 #b0dcd4 #3c7466;
}

.panel button {
  width: 38px;
  height: 38px;
  border: 4px solid;
  border-color: #c4f0ee #5c8c8c #5c8c8c #c4f0ee;
  background: #9cdada;
}

.panel svg {
  width: 30px;
  height: 30px;
  outline: 1px solid #000;
  outline-offset: -1px;
}

.panel.edit {
  border-bottom-color: #3c7466;
}

.edit button {
  border-color: #e8e8e8 #848484 #848484 #e8e8e8;
  background: #d0d0d0;
}

.panel .white {
  border-color: #fff #989898 #989898 #fff;
  background: #fff;
}

.panel .orange {
  border-color: #fce4a8 #a48038 #a48038 #fce4a8;
  background: #fcc44c;
}

.panel .red {
  border: 2px solid #d81010;
  padding: 2px;
}

.overview {
  flex: 1;
  min-height: 0;
  border: solid;
  border-width: 1px 2px 2px 1px;
  border-color: #3c7466 #b0ecdc #b0ecdc #3c7466;
}

.overview svg {
  width: 100%;
  height: 100%;
}

.coords {
  height: 44px;
  padding: 5px 3px;
  border: solid;
  border-width: 2px 2px 2px 1px;
  border-color: #5c9c90 #b0ecdc #b0ecdc #3c7466;
  background: #54ceb0;
  font-size: 15px;
  font-weight: bold;
  line-height: 15px;
}

/* command line */
.command {
  height: 33px;
  flex: none;
  display: flex;
  gap: 1px;
  padding: 1px 0 1px 2px;
}

.command > button {
  width: 30px;
  flex: none;
  padding: 1px;
  border: 2px solid #fcfccc;
  outline: 2px solid #c4c49c;
  outline-offset: -4px;
  background: #fcfccc;
}

.command > .on {
  border: 3px solid #54bca0;
}

.command > button svg {
  width: 20px;
  height: 20px;
  margin: auto;
  fill: none;
  stroke: #000;
}

.command label,
.command output {
  padding: 0 3px;
  background: #fcfccc;
  font-size: 12px;
  font-weight: bold;
  line-height: 31px;
}

.command label {
  width: 48px;
  white-space: nowrap;
}

.command output {
  flex: 1;
}

.field {
  width: 172px;
  padding: 1px;
  background: #fcfccc;
}

.field input {
  width: 100%;
  height: 100%;
  padding-left: 4px;
  border: 2px solid;
  border-color: #9c9c7c #c4c49c #c4c49c #9c9c7c;
  background: #fcfccc linear-gradient(90deg, #000, #000) 4px 4px / 1px 14px no-repeat;
  font: bold 12px "Liberation Mono", monospace;
}

.units {
  width: 79px;
  padding: 2px 3px 2px 6px;
  background: #54ceb0;
}

.units button {
  width: 100%;
  height: 100%;
  display: flex;
  align-items: center;
  justify-content: space-between;
  padding: 0 5px;
  border: 2px solid;
  border-color: #b0ecdc #2c7060 #2c7060 #b0ecdc;
  background: #54ceb0;
  font-size: 15px;
  font-weight: bold;
}

.units i {
  width: 12px;
  height: 7px;
  border: 2px solid;
  border-color: #b0ecdc #2c7060 #2c7060 #b0ecdc;
}

.status {
  height: 33px;
  flex: none;
  padding: 2px 1px 2px 2px;
  border-top: 1px solid #a0b8b8;
  background: #6c9c9c;
}

.status div {
  height: 100%;
  border: 1px solid #000;
  background: #b4fefe;
  box-shadow: inset 2px 2px #e4fefe, inset 0 -2px #b4fefe, inset 0 -4px #5c9494;
}

/* taskbar */
.taskbar {
  height: 27px;
  flex: none;
  display: flex;
  align-items: center;
  padding: 0 2px;
  border-top: 1px solid #fff;
  background: #d4d0c8;
  font: 11px "Liberation Sans", sans-serif;
}

.taskbar [lang="zh"] {
  font: 12px "Noto Sans CJK SC", sans-serif;
  line-height: 16px;
}

.start,
.tasks button {
  height: 22px;
  display: flex;
  align-items: center;
  gap: 2px;
  padding: 0 3px;
  border: 1px solid;
  border-color: #fff #404040 #404040 #fff;
  background: #d4d0c8;
  box-shadow: inset -1px -1px #808080;
  white-space: nowrap;
  overflow: hidden;
}

.start {
  width: 50px;
  gap: 1px;
}

.grip {
  width: 3px;
  height: 20px;
  margin-left: 4px;
  border: 1px solid;
  border-color: #fff #808080 #808080 #fff;
}

.grip.thin {
  margin-left: 2px;
}

.quick {
  display: flex;
  gap: 7px;
  padding: 0 8px 0 5px;
}

.quick button {
  border: none;
  background: none;
}

.grip + .tasks {
  margin-left: 4px;
}

.tasks {
  flex: 1;
  display: flex;
  gap: 3px;
}

.tasks button {
  width: 60px;
}

.tasks .active {
  border-color: #404040 #fff #fff #404040;
  background: #ecebe6;
  box-shadow: inset 1px 1px #808080;
}

.tray {
  width: 148px;
  height: 22px;
  display: flex;
  align-items: center;
  justify-content: space-between;
  padding: 0 12px 0 4px;
  border: 1px solid;
  border-color: #808080 #fff #fff #808080;
}

.tray svg {
  width: 90px;
  height: 16px;
}

/* popview window */
.popview {
  position: absolute;
  left: 740px;
  top: 132px;
  width: 527px;
  height: 548px;
  display: flex;
  flex-direction: column;
  padding: 3px 2px 2px 3px;
  border: 1px solid;
  border-color: #d4d0c8 #404040 #404040 #d4d0c8;
  background: #d4d0c8;
  box-shadow: inset 1px 1px #fff, inset -1px -1px #808080;
}

.poptitle {
  height: 18px;
  flex: none;
  display: flex;
  align-items: center;
  padding: 0 2px;
  background: linear-gradient(90deg, #808080, #c4c4c4);
}

.poptitle .caption {
  color: #d4d0c8;
}

.popbody {
  flex: 1;
  min-height: 0;
  display: flex;
  margin-top: 1px;
  background: #000;
}

.view {
  flex: 1;
  min-width: 0;
  height: 100%;
  border: solid;
  border-width: 3px;
  border-color: #3c7466 #b0ecdc #b0ecdc #3c7466;
}

.poptools {
  width: 37px;
  display: flex;
  flex-direction: column;
  gap: 2px;
  padding: 2px 1px 0 2px;
  background: linear-gradient(#000 246px, #54ceb0 246px);
}

.poptools button {
  width: 34px;
  height: 33px;
  padding: 1px;
  border: 2px solid #5cc4a8;
  background: #9cdada;
  box-shadow: inset 3px 3px #c4f8f0, inset -3px -3px #5c8c8c;
}

.poptools svg {
  width: 21px;
  height: 21px;
  margin: auto;
  outline: 1px solid #000;
  outline-offset: -1px;
}

.popclose {
  height: 28px;
  flex: none;
  padding: 2px;
  border: 1px solid #000;
  background: #5cc4a8;
}

.popclose button {
  width: 100%;
  height: 100%;
  border: 2px solid;
  border-color: #c8f8f0 #4c8484 #4c8484 #c8f8f0;
  background: #9cdada;
  font-size: 15px;
  font-weight: bold;
  line-height: 16px;
}

/* input method bar */
.ime {
  position: absolute;
  left: 1224px;
  top: 701px;
  width: 78px;
  height: 24px;
  display: flex;
  align-items: center;
  padding: 0 2px;
  border: 1px solid #888;
  background: #d8d4cc;
}

.ime .dots {
  width: 3px;
  height: 18px;
  background: repeating-linear-gradient(#888 0 1px, #d8d4cc 1px 2px);
}

.ime button {
  height: 20px;
  flex: 1;
  border: none;
  border-right: 1px solid #888;
  background: none;
}

.ime button:last-child {
  flex: none;
  width: 16px;
  border: none;
}

.ime svg {
  width: 16px;
  height: 16px;
  margin: auto;
}
```
